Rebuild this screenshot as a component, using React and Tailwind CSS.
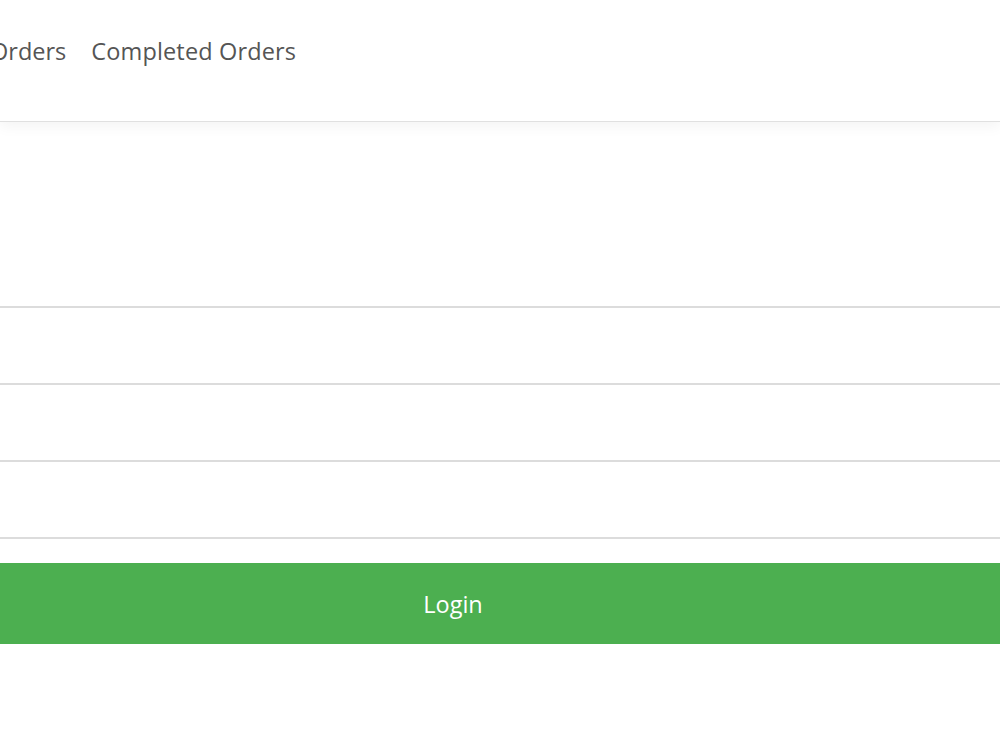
export default function App() {
  return (
    <div className="w-[1000px] h-[750px] overflow-hidden bg-white" style={{ fontFamily: '"Open Sans", "Noto Sans", sans-serif' }}>
      <header className="h-[122px] border-b border-[#e0e0e0] shadow-[0_4px_14px_rgba(0,0,0,0.05)] flex items-center relative z-10">
        <nav className="flex items-center gap-[25px] -ml-[10px] text-[23.5px] text-[#555555] pb-[17px]">
          <span>Orders</span>
          <span className="tracking-[0.15px]">Completed Orders</span>
        </nav>
      </header>
      <main className="-ml-[200px] w-[1306px]">
        <form className="pt-[184px] flex flex-col">
          <div className="h-[77px] border-t-2 border-[#dcdcdc]" />
          <div className="h-[77px] border-t-2 border-[#dcdcdc]" />
          <div className="h-[77px] border-t-2 border-[#dcdcdc]" />
          <div className="h-[26px] border-t-2 border-[#dcdcdc]" />
          <button type="button" className="h-[81px] bg-[#4caf50] text-white text-[23.5px] flex items-center justify-center pt-[2px]">
            Login
          </button>
        </form>
      </main>
    </div>
  );
}
